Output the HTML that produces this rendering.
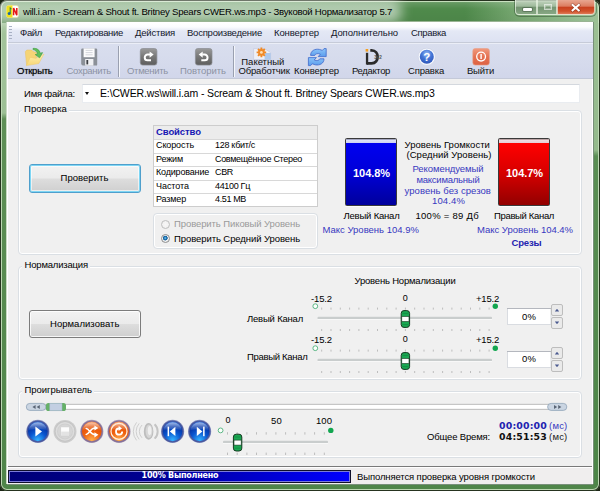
<!DOCTYPE html>
<html lang="ru"><head><meta charset="utf-8"><title>Звуковой Нормализатор 5.7</title>
<style>
html,body{margin:0;padding:0;background:#1d2616;}
body{width:600px;height:491px;overflow:hidden;font-family:"Liberation Sans",sans-serif;font-size:11px;}
#win{position:absolute;left:0;top:0;width:600px;height:491px;overflow:hidden;border-radius:7px 7px 7px 7px;
 background:
  linear-gradient(180deg,rgba(255,255,255,.35) 0,rgba(255,255,255,.12) 3px,rgba(255,255,255,0) 9px,rgba(0,0,0,.04) 22px,rgba(0,0,0,0) 23px) 0 0/600px 23px no-repeat,
  linear-gradient(90deg,#5b9256 0,#4f8a4b 400px,#4f8a4b 465px,#7aaa74 520px,#9cc498 585px,#a2c89e 600px) 0 0/600px 23px no-repeat,
  linear-gradient(180deg,#5c9056 0,#56894f 40%,#4f8549 100%);
 box-shadow:inset 0 0 0 1px #26331f, inset 0 0 0 2px rgba(215,235,205,.8);}
.abs,.t,#win div,#win svg,#win i{position:absolute;box-sizing:border-box;}
.t{white-space:pre;}
#client{left:7px;top:22px;width:586px;height:462px;background:#f0f0f0;border:1px solid #fff;box-shadow:-1px 0 0 0 #c9d9c4,1px 0 0 0 #78907a,0 1px 0 0 #78907a,0 -1px 0 0 #9ab494;}
#menubar{left:8px;top:23px;width:585px;height:20px;background:linear-gradient(180deg,#fff 0,#fbfcfe 4px,#e4e8f5 8px,#dde2f2 100%);border-bottom:1px solid #c6cbd8;}
#toolbar{left:8px;top:43px;width:585px;height:36px;background:linear-gradient(180deg,#f4f6fb 0,#d9deee 1.5px,#d5daec 60%,#d1d6ea 100%);border-bottom:1px solid #c4c9d8;}
.sep{width:2px;height:31px;top:46px;border-left:1px solid #9aa0b0;border-right:1px solid #f4f6fb;}
.grp{border:1px solid #dadfe4;border-radius:4px;box-shadow:inset 0 0 0 1px #fff;}
.grplabel{background:#f0f0f0;height:12px;}
.btn{border:1px solid #7c7c7c;border-radius:3px;background:linear-gradient(180deg,#f2f2f2 0,#ebebeb 48%,#dddddd 52%,#cfcfcf 100%);box-shadow:inset 0 0 0 1px rgba(255,255,255,.8);}
.btn.def{border-color:#4f9fcc;box-shadow:inset 0 0 0 1px #7fd6f4, inset 0 0 0 2px rgba(255,255,255,.6);}
#tbl{left:153px;top:125px;width:165px;height:81.5px;background:#fff;border:1px solid #cdcdcd;}
#tbl div{left:0;width:163px;height:1px;background:#d8d8d8;}
#tbl .hd{top:0;height:12.5px;background:#ececec;}
.meter{border:1px solid #3a3a3a;border-radius:1.5px;box-shadow:0 1px 0 rgba(255,255,255,.8);}
.field{background:#fff;border:1px solid #abadb3;border-top-color:#8e9097;}
.spin{width:12px;height:12px;border:1px solid #a8a8a8;border-radius:2px;background:linear-gradient(180deg,#f4f4f4,#d8d8d8);}
.tick{width:1px;height:3px;background:#c4c4c4;}
.track{height:3px;background:#e7eaea;border:1px solid #d0d0d0;border-radius:1px;}
#capbtn{left:515px;top:0;width:81px;height:16px;border-radius:0 0 5px 5px;box-shadow:0 0 0 1px rgba(40,70,40,.45);overflow:visible;}
.cb{top:0;height:15px;border:1px solid rgba(235,245,230,.7);border-top:0;background:linear-gradient(180deg,rgba(200,215,198,.85) 0,rgba(165,188,162,.8) 45%,rgba(112,142,110,.85) 50%,rgba(135,165,132,.85) 100%);}
.cb.close{background:linear-gradient(180deg,#e8a690 0,#dc7c60 45%,#c8401e 50%,#d2522c 80%,#dd7a56 100%);}
.grip{left:1px;top:3px;width:3px;height:14px;background:repeating-linear-gradient(180deg,#a8b0c4 0,#a8b0c4 1px,transparent 1px,transparent 3px);}
.radio{width:9.4px;height:9.4px;border-radius:50%;border:1px solid #8e8f8f;background:radial-gradient(circle at 50% 50%,#fff 0,#f4f4f4 60%,#d8d8d8 100%);}
.radio.on{background:radial-gradient(circle at 47% 44%,#7ad0f0 0,#1b72b4 1.4px,#1b5f98 2.1px,#f4f4f4 2.7px,#e0e0e0 100%);}

#glow{left:-14px;top:-1px;width:416px;height:24px;border-radius:11px;background:rgba(255,255,255,.56);filter:blur(6px);}
#lb{left:2px;top:23px;width:4px;height:462px;background:linear-gradient(180deg,#a3c49b 0,#9cbf94 90px,#5e8f56 96px,#4f8549 100%);}
#rb{left:594px;top:16px;width:4px;height:469px;background:linear-gradient(180deg,#9cc094 0,#94ba8c 134px,#5a8e54 140px,#4c8547 100%);}

</style></head>
<body>
<div id="win">
<div id="lb"></div><div id="rb"></div>
<div id="glow"></div>
<div id="client"></div>
<div id="menubar"><i class="grip"></i></div>
<div id="toolbar"></div>
<div class="sep" style="left:118px"></div>
<div class="sep" style="left:233px"></div>
<!-- caption buttons -->
<div id="capbtn">
 <div class="cb" style="left:0;width:22px;border-radius:0 0 0 4px"><i style="left:7px;top:8px;width:9px;height:3px;background:#fff;box-shadow:0 0 0 1px rgba(60,80,60,.45);border-radius:1px"></i></div>
 <div class="cb" style="left:22px;width:20px"><i style="left:6px;top:4px;width:8px;height:6px;border:1px solid rgba(255,255,255,.6);box-shadow:inset 0 0 0 1px rgba(255,255,255,.25)"></i></div>
 <div class="cb close" style="left:42px;width:38px;border-radius:0 0 4px 0"></div>
 <svg style="left:42px;top:0" width="38" height="15" viewBox="0 0 38 15"><path d="M15.6 5 L21.8 10.4 M21.8 5 L15.6 10.4" stroke="#6a2a1c" stroke-width="3.2" stroke-linecap="square" opacity=".5"/><path d="M15.6 5 L21.8 10.4 M21.8 5 L15.6 10.4" stroke="#fff" stroke-width="2" stroke-linecap="square"/></svg>
</div>
<!-- title icon -->
<svg style="left:6px;top:5px" width="13" height="13" viewBox="0 0 13 13"><rect x=".5" y=".5" width="12" height="12" rx="2" fill="#fff" stroke="#e8e0a0" stroke-width=".6"/><path d="M.5 2.5a2 2 0 0 1 2-2h4v12h-4a2 2 0 0 1-2-2z" fill="#efe11c"/><circle cx="3.2" cy="8.6" r="1.5" fill="#1a66a8"/><path d="M4.2 8.6V2.6l1.2 1.6" stroke="#1e7a50" stroke-width="1" fill="none"/><path d="M7.6 10.2V3l3.2 7.2V3" stroke="#e41818" stroke-width="1.5" fill="none"/></svg>
<!-- toolbar icons -->
<svg style="left:8px;top:44px" width="584" height="26" viewBox="8 44 584 26">
 <defs>
  <linearGradient id="gfold" x1="0" y1="0" x2="0" y2="1"><stop offset="0" stop-color="#fdf0b4"/><stop offset="1" stop-color="#f7d673"/></linearGradient>
  <linearGradient id="ggrey" x1="0" y1="0" x2="0" y2="1"><stop offset="0" stop-color="#9a9a9a"/><stop offset=".5" stop-color="#777"/><stop offset="1" stop-color="#5e5e5e"/></linearGradient>
  <linearGradient id="gexit" x1="0" y1="0" x2="0" y2="1"><stop offset="0" stop-color="#f09a7e"/><stop offset=".5" stop-color="#e57252"/><stop offset="1" stop-color="#dd6242"/></linearGradient>
  <radialGradient id="ghelp" cx=".5" cy=".3" r=".8"><stop offset="0" stop-color="#9cc0f6"/><stop offset=".45" stop-color="#4274d6"/><stop offset="1" stop-color="#2a4eb0"/></radialGradient>
  <linearGradient id="gconv" x1="0" y1="0" x2="0" y2="1"><stop offset="0" stop-color="#8cc4f8"/><stop offset="1" stop-color="#5a9cec"/></linearGradient>
 </defs>
 <!-- open folder -->
 <path d="M25.3 51.6 L26.8 50 L31.6 50 L33.2 51.6 L36.4 52.6 L36.4 58 L26.6 65.2 Z" fill="#f5d476" stroke="#e8c060" stroke-width=".5"/>
 <path d="M26.4 65.6 L30.2 57.4 L36 58.4 L44 54 L38.8 63.6 Z" fill="url(#gfold)" stroke="#efcb6a" stroke-width=".5"/>
 <path d="M33 48.4 C37 48 39.6 50 40.2 53.2 L42.6 52.6 L39.6 57.8 L35.2 54.6 L37.6 54 C37 51.6 35.4 50 33 49.6 Z" fill="#5fbf5a" stroke="#3d9a3e" stroke-width=".6"/>
 <!-- floppy -->
 <path d="M81.2 49.6 a1.2 1.2 0 0 1 1.2-1.2 H96 a1.2 1.2 0 0 1 1.2 1.2 V64.4 a1.2 1.2 0 0 1-1.2 1.2 H82.6 L81.2 64.2 Z" fill="#8b9098"/>
 <rect x="83.6" y="48.4" width="11" height="8.8" fill="#fbfbfc"/>
 <path d="M85.6 50.4h7M85.6 52.6h7M85.6 54.8h7" stroke="#b8bcc4" stroke-width=".6"/>
 <rect x="85.2" y="59" width="8.2" height="6.6" fill="#f0f1f4"/>
 <rect x="86.4" y="60" width="1.8" height="4.4" fill="#3c3e44"/>
 <!-- undo/redo -->
 <rect x="140.3" y="48.5" width="16.6" height="16.6" rx="2.4" fill="url(#ggrey)" stroke="#8a8c92" stroke-width=".7"/>
 <path d="M151 60.3 H147.6 a2.85 2.85 0 0 1 0 -5.7 H150" stroke="#fff" stroke-width="2" fill="none"/>
 <path d="M149.6 51.4 l4 3.2 l-4 3.2 z" fill="#fff"/>
 <rect x="195.4" y="48.5" width="16.6" height="16.6" rx="2.4" fill="url(#ggrey)" stroke="#8a8c92" stroke-width=".7"/>
 <path d="M201.3 60.3 H204.7 a2.85 2.85 0 0 0 0 -5.7 H202.3" stroke="#fff" stroke-width="2" fill="none"/>
 <path d="M202.7 51.4 l-4 3.2 l4 3.2 z" fill="#fff"/>
 <!-- batch -->
 <path d="M253.6 48.6 h11 l6 4 v7 h-17 z" fill="#eef0f8" stroke="#c0c6dc" stroke-width=".6"/>
 <path d="M264.6 53 h6 v6.6 h-6 z" fill="#9cc0ec" opacity=".8"/>
 <g transform="translate(261.4 52.4)"><circle r="3.3" fill="#f08a28"/><g stroke="#f08a28" stroke-width="1.9"><path d="M0-4.8V4.8M-4.8 0H4.8M-3.4-3.4L3.4 3.4M-3.4 3.4L3.4-3.4"/></g><circle r="1.4" fill="#fbe0b8"/></g>
 <!-- converter -->
 <path d="M310.6 55.4 C310.6 50.6 315 48.6 319.4 49.4 L322.4 50.4 L324 48.6 L326.2 48.6 L326.2 56.6 L318.2 56.6 L320.4 54.2 C317.6 53 315.6 53.6 314.8 55.4 Z" fill="url(#gconv)" stroke="#3f68cc" stroke-width=".8" stroke-linejoin="round"/>
 <path d="M324 58.8 C324 63.6 319.6 65.6 315.2 64.8 L312.2 63.8 L310.6 65.6 L308.4 65.6 L308.4 57.6 L316.4 57.6 L314.2 60 C317 61.2 319 60.6 319.8 58.8 Z" fill="url(#gconv)" stroke="#3f68cc" stroke-width=".8" stroke-linejoin="round"/>
 <!-- editor iD -->
 <rect x="365.6" y="49" width="2.6" height="2.6" fill="#f5a020"/>
 <rect x="365.9" y="52.8" width="2.3" height="11.8" fill="#2b2b2b"/>
 <path d="M367 63.3 H371.6 C379.6 63.3 379.6 50.4 371.6 50.4 H370.3" stroke="#2b2b2b" stroke-width="2.8" fill="none"/>
 <text x="374.2" y="58.8" font-size="4.6" font-weight="bold" font-family="Liberation Sans, sans-serif" fill="#555">3v2</text>
 <!-- help -->
 <circle cx="426.8" cy="56.8" r="8.6" fill="#f6f8fd" stroke="#c4cadc" stroke-width=".5"/>
 <circle cx="426.8" cy="56.8" r="7" fill="url(#ghelp)"/>
 <text x="426.8" y="60.9" font-size="11.5" font-weight="bold" text-anchor="middle" font-family="Liberation Sans, sans-serif" fill="#fff">?</text>
 <!-- exit -->
 <rect x="472.8" y="48.5" width="16.6" height="16.6" rx="2.4" fill="url(#gexit)" stroke="#e8a088" stroke-width=".6"/>
 <circle cx="481.1" cy="56.6" r="4.4" fill="none" stroke="#fff" stroke-width="1.3"/>
 <rect x="480.4" y="54" width="1.4" height="5" fill="#fff"/>
</svg>
<!-- file field -->
<div class="field" style="left:82px;top:84px;width:498px;height:19px;border-color:#e9ecf0;border-top-color:#d4d8de"></div>
<i style="left:85.2px;top:92px;width:0;height:0;border:2.8px solid transparent;border-top:3.3px solid #111;border-bottom:0"></i>
<!-- groups -->
<div class="grp" style="left:18px;top:110px;width:564px;height:145px"></div>
<div class="grp" style="left:18px;top:266px;width:564px;height:114px"></div>
<div class="grp" style="left:18px;top:391px;width:564px;height:67px"></div>
<div class="grplabel" style="left:22px;top:104px;width:47px"></div>
<div class="grplabel" style="left:22px;top:260px;width:68px"></div>
<div class="grplabel" style="left:22px;top:385px;width:72px"></div>
<!-- buttons -->
<div class="btn def" style="left:29px;top:164px;width:112px;height:28.5px"></div>
<div class="btn" style="left:29px;top:310px;width:112px;height:28px"></div>
<!-- table -->
<div id="tbl"><div class="hd"></div><div style="top:12.5px"></div><div style="top:26.5px"></div><div style="top:40px"></div><div style="top:53.5px"></div><div style="top:67px"></div></div>
<div class="grp" style="left:153px;top:213px;width:165px;height:36px"></div>
<i class="radio" style="left:161px;top:219.5px;opacity:.5"></i>
<i class="radio on" style="left:161px;top:233.6px"></i>
<!-- meters -->
<div class="meter" style="left:345px;top:138px;width:52px;height:67.6px;background:linear-gradient(180deg,#6a6a88 0,#dfe3f8 1px,#cfd3f2 3.6px,#0000f0 4.4px,#0000d8 50%,#00009c 100%)"></div>
<div class="meter" style="left:498px;top:138px;width:52px;height:67.6px;background:linear-gradient(180deg,#886a6a 0,#f0dce0 1px,#e6cfd6 3.6px,#ff0000 4.4px,#d80000 50%,#920000 100%)"></div>
<!-- sliders + player svg -->
<svg style="left:8px;top:290px" width="584" height="175" viewBox="8 290 584 175">
 <defs>
  <g id="thumb"><rect x="-4.2" y="-8.4" width="8.4" height="16.8" rx="2.8" fill="#1aa752" stroke="#173a22" stroke-width="1"/><rect x="-3.6" y="-2.5" width="7.2" height="5" fill="#fff" stroke="#173a22" stroke-width=".6"/><path d="M-3-5.6H3M-3 5.6H3" stroke="#128a40" stroke-width=".8"/></g>
  <g id="nticks"><path d="M321.7 0v2M331 0v2M340.3 0v2M349.6 0v2M358.9 0v2M368.2 0v2M377.5 0v2M386.8 0v2M396.1 0v2M405.4 0v2M414.7 0v2M424 0v2M433.3 0v2M442.6 0v2M451.9 0v2M461.2 0v2M470.5 0v2M479.8 0v2M489.1 0v2" stroke="#bdbdbd" stroke-width="1"/></g>
  <g id="vticks"><path d="M227.5 0v2.4M237.2 0v2.4M246.9 0v2.4M256.5 0v2.4M266.2 0v2.4M275.9 0v2.4M285.6 0v2.4M295.2 0v2.4M304.9 0v2.4M314.6 0v2.4M324.3 0v2.4" stroke="#bdbdbd" stroke-width="1"/></g>
  <g id="nslider">
   <use href="#nticks" y="307.6"/><use href="#nticks" y="329"/>
   <rect x="317.5" y="316.8" width="174.5" height="2.6" rx="1" fill="#c9cdcd"/><rect x="317.5" y="319" width="174.5" height="1" fill="#f8f8f8"/>
   <circle cx="315.3" cy="306.2" r="2.4" fill="#fbfffb" stroke="#4db07a" stroke-width=".9"/>
   <circle cx="495.3" cy="306.2" r="2.7" fill="#12a650"/>
   <use href="#thumb" x="405.4" y="319"/>
  </g>
  <radialGradient id="gblue" cx=".5" cy=".95" r=".95"><stop offset="0" stop-color="#35b4ff"/><stop offset=".45" stop-color="#0a56d0"/><stop offset=".75" stop-color="#0436a8"/><stop offset="1" stop-color="#2a6ad4"/></radialGradient>
  <radialGradient id="gor" cx=".5" cy=".95" r=".95"><stop offset="0" stop-color="#ffb050"/><stop offset=".45" stop-color="#f06410"/><stop offset=".75" stop-color="#e65208"/><stop offset="1" stop-color="#f48a4a"/></radialGradient>
  <radialGradient id="ggr" cx=".5" cy=".5" r=".5"><stop offset="0" stop-color="#e4e4e4"/><stop offset=".7" stop-color="#d6d6d6"/><stop offset="1" stop-color="#c4c4c4"/></radialGradient>
  <linearGradient id="gsh" x1="0" y1="0" x2="0" y2="1"><stop offset="0" stop-color="#fff" stop-opacity=".55"/><stop offset="1" stop-color="#fff" stop-opacity=".05"/></linearGradient>
  <g id="bblue"><circle r="11.6" fill="#8e98c4"/><circle r="11" fill="#4a589e"/><circle r="9.8" fill="url(#gblue)"/><path d="M-9.4 -1 A9.5 9.5 0 0 1 9.4 -1 C5 -3 -5 -3 -9.4 -1Z" fill="url(#gsh)"/></g>
  <g id="bor"><circle r="11.6" fill="#b0a2b8"/><circle r="11" fill="#84709a"/><circle r="9.8" fill="url(#gor)"/><path d="M-9.4 -1 A9.5 9.5 0 0 1 9.4 -1 C5 -3 -5 -3 -9.4 -1Z" fill="url(#gsh)"/></g>
 </defs>
 <use href="#nslider"/>
 <use href="#nslider" y="42"/>
 <!-- spin boxes -->
 <g id="spin">
  <rect x="507.5" y="308.5" width="43.5" height="16" fill="#fff" stroke="#d9dce1" stroke-width="1"/><path d="M507 308.5h44" stroke="#b4b7be"/>
  <rect x="551.5" y="304.5" width="11" height="11" rx="1.5" fill="#eaeaea" stroke="#bdbdbd"/><rect x="551.5" y="317.5" width="11" height="11" rx="1.5" fill="#eaeaea" stroke="#bdbdbd"/>
  <path d="M554.8 311.6l2.2-2.8l2.2 2.8z" fill="#4a5a90"/><path d="M554.8 321.4l2.2 2.8l2.2-2.8z" fill="#4a5a90"/>
 </g>
 <use href="#spin" y="43"/>
 <!-- seek bar -->
 <rect x="46" y="404.3" width="503" height="5" fill="#fff" stroke="#b4b4b4" stroke-width=".9"/>
 <rect x="26.3" y="403.4" width="19.6" height="7" rx="3.5" fill="#cad5e2" stroke="#8fa3b8" stroke-width=".8"/>
 <path d="M32.4 406.9l3.2-2v4zM36.6 406.9l3.2-2v4z" fill="#5a6676"/>
 <rect x="547.6" y="403.4" width="19.2" height="7" rx="3.5" fill="#cad5e2" stroke="#8fa3b8" stroke-width=".8"/>
 <path d="M554 404.9l3.2 2l-3.2 2zM558.2 404.9l3.2 2l-3.2 2z" fill="#5a6676"/>
 <rect x="46" y="403" width="20" height="8" rx="2.6" fill="#66b068"/>
 <rect x="49.8" y="403.2" width="12.2" height="7.6" fill="#c3cfe2" stroke="#9eb0c8" stroke-width=".5"/>
 <!-- player buttons -->
 <use href="#bblue" x="37.8" y="431.4"/><path d="M35.4 426.4v10l6.6-5z" fill="#fff"/>
 <g transform="translate(65 431.4)"><circle r="11.5" fill="#cdcdcd"/><circle r="10.4" fill="#c4c4c4"/><circle r="9.4" fill="#dcdcdc"/><circle r="8" fill="#cfcfcf"/><circle r="7" fill="#d6d6d6"/><rect x="-4.4" y="-4.6" width="9" height="9" rx=".8" fill="#fcfcfc" stroke="#c4c4c4" stroke-width=".6"/><rect x="-3.8" y="0.2" width="7.8" height="3.6" fill="#e3e3e3"/></g>
 <use href="#bor" x="91.8" y="431.4"/>
 <g stroke="#fff" stroke-width="1.5" fill="none" stroke-linecap="round"><path d="M86.2 428.4 C89.4 428.6 90 434.8 95.4 434.8"/><path d="M86.2 434.4 C89.4 434.2 90 428 95.4 428"/></g>
 <path d="M94.4 425.4l4 2.6l-4 2.6zM94.4 432.2l4 2.6l-4 2.6z" fill="#fff"/>
 <use href="#bor" x="119" y="431.4"/>
 <circle cx="119" cy="431.4" r="8" fill="none" stroke="#ffeeda" stroke-width="1.3"/>
 <path d="M122.2 431.6 a3.1 3.1 0 1 1 -3.2 -3.1" stroke="#fff" stroke-width="1.8" fill="none"/>
 <path d="M118.6 425.8l3.4 2.6l-3.4 2.6z" fill="#fff"/>
 <!-- speaker -->
 <g fill="none" stroke="#cfcfcf" stroke-width="1">
  <path d="M142 425a9 9 0 0 0 0 12.8M139.2 423.4a12 12 0 0 0 0 16M136.6 422.4a14 14 0 0 0 0 18" />
  <path d="M154.6 424.2a10 10 0 0 1 0 14.4" stroke-width="2" stroke="#c4c4c4"/>
 </g>
 <ellipse cx="148.6" cy="431.4" rx="4.8" ry="8.4" fill="#bdbdbd"/>
 <ellipse cx="149" cy="431.2" rx="3.4" ry="6.8" fill="#d6d6d6"/>
 <ellipse cx="149.6" cy="430.6" rx="1.8" ry="4.6" fill="#efefef"/>
 <use href="#bblue" x="172.6" y="431.4"/><path d="M175.4 426.8v9.2l-5.6-4.6z" fill="#fff"/><rect x="167.6" y="426.6" width="1.5" height="9.6" fill="#fff"/>
 <use href="#bblue" x="199.6" y="431.4"/><path d="M196.8 426.8v9.2l5.6-4.6z" fill="#fff"/><rect x="203.1" y="426.6" width="1.5" height="9.6" fill="#fff"/>
 <!-- volume -->
 <use href="#vticks" y="432.2"/><use href="#vticks" y="452.6"/>
 <rect x="223" y="440.8" width="105" height="2.6" rx="1" fill="#c9cdcd"/><rect x="223" y="443" width="105" height="1" fill="#f8f8f8"/>
 <circle cx="220.6" cy="430.4" r="2.4" fill="#fbfffb" stroke="#4db07a" stroke-width=".9"/>
 <circle cx="330.8" cy="430.4" r="2.7" fill="#12a650"/>
 <use href="#thumb" x="237.6" y="442.6"/>
</svg>
<!-- status -->
<div style="left:8px;top:466px;width:584px;height:18px;background:#f0eeee;border-top:1px solid #7a7a7a;box-shadow:inset 0 1px 0 #fff"></div>
<div style="left:8px;top:470px;width:343px;height:12.6px;background:linear-gradient(90deg,#000078 0,#000090 40%,#0000ff 100%);border:1px solid #10102a;box-shadow:inset 0 0 0 1px #7c7cd8"></div>

<span class="t" style="left:23px;top:4.5px;font-size:9.6px;line-height:13.6px;letter-spacing:-0.24px;color:#000;">will.i.am - Scream &amp; Shout ft. Britney Spears CWER.ws.mp3 - Звуковой Нормализатор 5.7</span>
<span class="t" style="left:20px;top:26.2px;font-size:9.5px;line-height:13.5px;letter-spacing:-0.34px;color:#14182c;">Файл</span>
<span class="t" style="left:55px;top:26.2px;font-size:9.5px;line-height:13.5px;letter-spacing:-0.31px;color:#14182c;">Редактирование</span>
<span class="t" style="left:135px;top:26.2px;font-size:9.5px;line-height:13.5px;letter-spacing:-0.2px;color:#14182c;">Действия</span>
<span class="t" style="left:187px;top:26.2px;font-size:9.5px;line-height:13.5px;letter-spacing:-0.23px;color:#14182c;">Воспроизведение</span>
<span class="t" style="left:274px;top:26.2px;font-size:9.5px;line-height:13.5px;letter-spacing:-0.13px;color:#14182c;">Конвертер</span>
<span class="t" style="left:331px;top:26.2px;font-size:9.5px;line-height:13.5px;letter-spacing:-0.11px;color:#14182c;">Дополнительно</span>
<span class="t" style="left:411px;top:26.2px;font-size:9.5px;line-height:13.5px;letter-spacing:-0.33px;color:#14182c;">Справка</span>
<span class="t" style="left:17px;top:63.8px;font-size:9.5px;line-height:13.5px;letter-spacing:-0.26px;color:#000;text-shadow:0 0 1px rgba(0,0,0,.6);">Открыть</span>
<span class="t" style="left:66.5px;top:63.8px;font-size:9.5px;line-height:13.5px;letter-spacing:-0.3px;color:#8d93a3;">Сохранить</span>
<span class="t" style="left:127px;top:63.8px;font-size:9.5px;line-height:13.5px;letter-spacing:-0.3px;color:#8d93a3;">Отменить</span>
<span class="t" style="left:180px;top:63.8px;font-size:9.5px;line-height:13.5px;letter-spacing:-0.04px;color:#8d93a3;">Повторить</span>
<span class="t" style="left:241.3px;top:54.9px;font-size:9.5px;line-height:13.5px;letter-spacing:-0.01px;color:#111;">Пакетный</span>
<span class="t" style="left:238.4px;top:63.8px;font-size:9.5px;line-height:13.5px;letter-spacing:-0.13px;color:#111;">Обработчик</span>
<span class="t" style="left:294px;top:63.8px;font-size:9.5px;line-height:13.5px;letter-spacing:-0.13px;color:#111;">Конвертер</span>
<span class="t" style="left:352px;top:63.8px;font-size:9.5px;line-height:13.5px;letter-spacing:-0.36px;color:#111;">Редактор</span>
<span class="t" style="left:408px;top:63.8px;font-size:9.5px;line-height:13.5px;letter-spacing:-0.18px;color:#111;">Справка</span>
<span class="t" style="left:467px;top:63.8px;font-size:9.5px;line-height:13.5px;letter-spacing:-0.23px;color:#111;">Выйти</span>
<span class="t" style="left:24px;top:86.8px;font-size:9.5px;line-height:13.5px;letter-spacing:-0.2px;color:#000;">Имя файла:</span>
<span class="t" style="left:100px;top:86.2px;font-size:10.5px;line-height:14.5px;letter-spacing:-0.14px;color:#000;">E:\CWER.ws\will.i.am - Scream &amp; Shout ft. Britney Spears CWER.ws.mp3</span>
<span class="t" style="left:24px;top:102.2px;font-size:9.5px;line-height:13.5px;letter-spacing:0.05px;color:#000;">Проверка</span>
<span class="t" style="left:24.5px;top:258.2px;font-size:9.5px;line-height:13.5px;letter-spacing:-0.18px;color:#000;">Нормализация</span>
<span class="t" style="left:24.5px;top:383.4px;font-size:9.5px;line-height:13.5px;letter-spacing:-0.04px;color:#000;">Проигрыватель</span>
<span class="t" style="left:60.5px;top:171.4px;font-size:9.5px;line-height:13.5px;letter-spacing:0.05px;color:#000;">Проверить</span>
<span class="t" style="left:50px;top:317.1px;font-size:9.5px;line-height:13.5px;letter-spacing:0.04px;color:#000;">Нормализовать</span>
<span class="t" style="left:156px;top:124.6px;font-size:9.5px;line-height:13.5px;letter-spacing:-0.09px;color:#1818b4;font-weight:bold;">Свойство</span>
<span class="t" style="left:156px;top:139.1px;font-size:9px;line-height:13px;letter-spacing:-0.11px;color:#000;">Скорость</span>
<span class="t" style="left:215px;top:139.1px;font-size:9px;line-height:13px;letter-spacing:-0.3px;color:#000;">128 кбит/с</span>
<span class="t" style="left:156px;top:152.7px;font-size:9px;line-height:13px;letter-spacing:-0.15px;color:#000;">Режим</span>
<span class="t" style="left:215px;top:152.7px;font-size:9px;line-height:13px;letter-spacing:-0.32px;color:#000;">Совмещённое Стерео</span>
<span class="t" style="left:156px;top:166.2px;font-size:9px;line-height:13px;letter-spacing:-0.18px;color:#000;">Кодирование</span>
<span class="t" style="left:215px;top:166.2px;font-size:9px;line-height:13px;letter-spacing:-0.34px;color:#000;">CBR</span>
<span class="t" style="left:156px;top:179.8px;font-size:9px;line-height:13px;letter-spacing:-0.05px;color:#000;">Частота</span>
<span class="t" style="left:215px;top:179.8px;font-size:9px;line-height:13px;letter-spacing:-0.32px;color:#000;">44100 Гц</span>
<span class="t" style="left:156px;top:193.3px;font-size:9px;line-height:13px;letter-spacing:-0.16px;color:#000;">Размер</span>
<span class="t" style="left:215px;top:193.3px;font-size:9px;line-height:13px;letter-spacing:-0.36px;color:#000;">4.51 MB</span>
<span class="t" style="left:174px;top:217.2px;font-size:9.5px;line-height:13.5px;letter-spacing:-0.09px;color:#9a9a9a;">Проверить Пиковый Уровень</span>
<span class="t" style="left:174px;top:232.1px;font-size:9.5px;line-height:13.5px;letter-spacing:-0.08px;color:#000;">Проверить Средний Уровень</span>
<span class="t" style="left:353px;top:166.0px;font-size:11px;line-height:15px;letter-spacing:-0.05px;color:#fff;font-weight:bold;">104.8%</span>
<span class="t" style="left:506px;top:166.0px;font-size:11px;line-height:15px;letter-spacing:-0.05px;color:#fff;font-weight:bold;">104.7%</span>
<span class="t" style="left:343.5px;top:208.8px;font-size:9.5px;line-height:13.5px;letter-spacing:-0.2px;color:#000;">Левый Канал</span>
<span class="t" style="left:494px;top:208.8px;font-size:9.5px;line-height:13.5px;letter-spacing:-0.34px;color:#000;">Правый Канал</span>
<span class="t" style="left:322.5px;top:223.2px;font-size:9.5px;line-height:13.5px;letter-spacing:0.0px;color:#3838c0;">Макс Уровень 104.9%</span>
<span class="t" style="left:477px;top:223.2px;font-size:9.5px;line-height:13.5px;letter-spacing:-0.02px;color:#3838c0;">Макс Уровень 104.4%</span>
<span class="t" style="left:511.5px;top:235.8px;font-size:9.5px;line-height:13.5px;letter-spacing:-0.16px;color:#2424b0;font-weight:bold;">Срезы</span>
<span class="t" style="left:404.5px;top:137.8px;font-size:9.5px;line-height:13.5px;letter-spacing:0.03px;color:#000;">Уровень Громкости</span>
<span class="t" style="left:406.5px;top:148.2px;font-size:9.5px;line-height:13.5px;letter-spacing:0.05px;color:#000;">(Средний Уровень)</span>
<span class="t" style="left:412.5px;top:161.8px;font-size:9.5px;line-height:13.5px;letter-spacing:-0.07px;color:#3838c0;">Рекомендуемый</span>
<span class="t" style="left:416.5px;top:172.8px;font-size:9.5px;line-height:13.5px;letter-spacing:-0.24px;color:#3838c0;">максимальный</span>
<span class="t" style="left:404.5px;top:183.8px;font-size:9.5px;line-height:13.5px;letter-spacing:0.06px;color:#3838c0;">уровень без срезов</span>
<span class="t" style="left:432px;top:194.2px;font-size:9.5px;line-height:13.5px;letter-spacing:0.13px;color:#3838c0;">104.4%</span>
<span class="t" style="left:415.5px;top:208.8px;font-size:9.5px;line-height:13.5px;letter-spacing:0.27px;color:#000;">100% = 89 Дб</span>
<span class="t" style="left:354.5px;top:273.8px;font-size:9.5px;line-height:13.5px;letter-spacing:-0.2px;color:#000;">Уровень Нормализации</span>
<span class="t" style="left:247px;top:312.2px;font-size:9.5px;line-height:13.5px;letter-spacing:-0.2px;color:#000;">Левый Канал</span>
<span class="t" style="left:247px;top:350.2px;font-size:9.5px;line-height:13.5px;letter-spacing:-0.3px;color:#000;">Правый Канал</span>
<span class="t" style="left:311px;top:291.8px;font-size:9.5px;line-height:13.5px;letter-spacing:-0.13px;color:#000;">-15.2</span>
<span class="t" style="left:402.8px;top:292.0px;font-size:9px;line-height:13px;letter-spacing:-0.62px;color:#000;">0</span>
<span class="t" style="left:476px;top:291.8px;font-size:9.5px;line-height:13.5px;letter-spacing:-0.21px;color:#000;">+15.2</span>
<span class="t" style="left:311px;top:332.8px;font-size:9.5px;line-height:13.5px;letter-spacing:-0.13px;color:#000;">-15.2</span>
<span class="t" style="left:402.8px;top:333.0px;font-size:9px;line-height:13px;letter-spacing:-0.62px;color:#000;">0</span>
<span class="t" style="left:476px;top:332.8px;font-size:9.5px;line-height:13.5px;letter-spacing:-0.21px;color:#000;">+15.2</span>
<span class="t" style="left:522px;top:309.8px;font-size:9.5px;line-height:13.5px;letter-spacing:0.13px;color:#000;">0%</span>
<span class="t" style="left:522px;top:352.2px;font-size:9.5px;line-height:13.5px;letter-spacing:0.13px;color:#000;">0%</span>
<span class="t" style="left:225.5px;top:414.0px;font-size:9px;line-height:13px;letter-spacing:-0.52px;color:#000;">0</span>
<span class="t" style="left:271px;top:413.8px;font-size:9.5px;line-height:13.5px;letter-spacing:0.21px;color:#000;">50</span>
<span class="t" style="left:316px;top:413.8px;font-size:9.5px;line-height:13.5px;letter-spacing:0.05px;color:#000;">100</span>
<span class="t" style="left:499px;top:419.0px;font-size:9.4px;line-height:13.4px;letter-spacing:0.17px;color:#2222b0;font-weight:bold;font-family:'DejaVu Sans',sans-serif;">00:00:00</span>
<span class="t" style="left:549px;top:418.8px;font-size:9.5px;line-height:13.5px;letter-spacing:0.22px;color:#3838c0;">(мс)</span>
<span class="t" style="left:427px;top:430.2px;font-size:9.5px;line-height:13.5px;letter-spacing:-0.16px;color:#000;">Общее Время:</span>
<span class="t" style="left:499px;top:430.3px;font-size:9.4px;line-height:13.4px;letter-spacing:0.17px;color:#111;font-weight:bold;font-family:'DejaVu Sans',sans-serif;">04:51:53</span>
<span class="t" style="left:549px;top:430.2px;font-size:9.5px;line-height:13.5px;letter-spacing:0.22px;color:#222;">(мс)</span>
<span class="t" style="left:141.6px;top:470.3px;font-size:8px;line-height:12px;letter-spacing:-0.21px;color:#fff;font-weight:bold;font-family:'DejaVu Sans',sans-serif;">100% Выполнено</span>
<span class="t" style="left:357px;top:469.8px;font-size:9.5px;line-height:13.5px;letter-spacing:-0.12px;color:#000;">Выполняется проверка уровня громкости</span>
</div>
</body></html>
